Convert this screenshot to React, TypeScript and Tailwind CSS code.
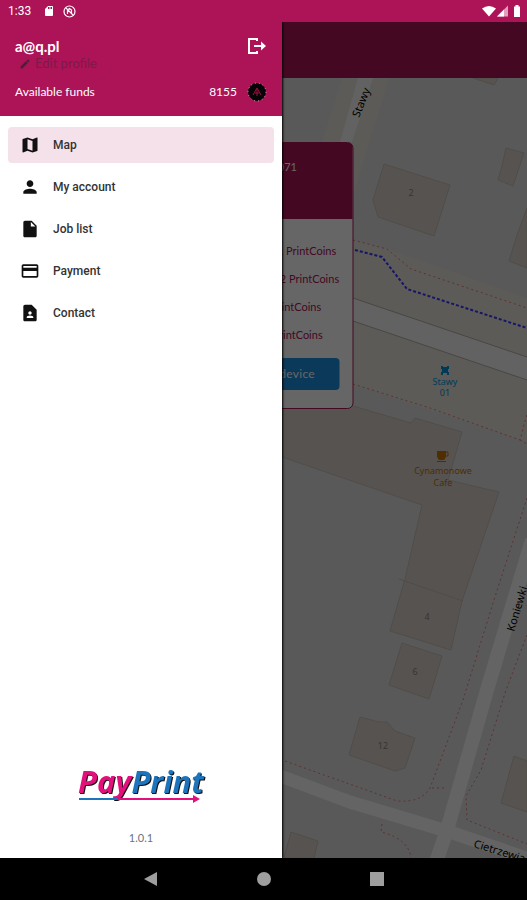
import type { ReactNode } from 'react'
import {
  MdContactPage,
  MdCreditCard,
  MdEdit,
  MdInsertDriveFile,
  MdMap,
  MdPerson,
  MdSdCard,
} from 'react-icons/md'

interface MenuItem {
  label: string
  href: string
  icon: ReactNode
}

const menuItems: MenuItem[] = [
  { label: 'Map', href: '#map', icon: <MdMap /> },
  { label: 'My account', href: '#account', icon: <MdPerson /> },
  { label: 'Job list', href: '#jobs', icon: <MdInsertDriveFile /> },
  { label: 'Payment', href: '#payment', icon: <MdCreditCard /> },
  { label: 'Contact', href: '#contact', icon: <MdContactPage /> },
]

const prices = ['A4 mono: 0.1 PrintCoins', 'A4 color: 0.12 PrintCoins', 'A4 scan: 1 PrintCoins', 'A4 copy: 1 PrintCoins']

function StatusBar() {
  return (
    <header className="flex h-[22px] items-center justify-between bg-[#ad1457] pl-2 pr-[5px] text-white">
      <div className="flex items-center gap-2">
        <span className="font-[Roboto,sans-serif] text-xs">1:33</span>
        <MdSdCard className="ml-1 h-3 w-3" />
        <svg className="h-[13px] w-[13px]" viewBox="0 0 13 13" fill="none" stroke="currentColor">
          <circle cx="6.5" cy="6.5" r="5.5" strokeWidth="1.2" />
          <path d="M4.500 9V5L6.500 3.500L8.500 5V8.500M3 3L10 10" strokeWidth="1.2" />
        </svg>
      </div>
      <svg className="h-3 w-10" viewBox="0 0 40 12" fill="currentColor">
        <path d="M0 3.5Q7 -1.5 14 3.5L7 11.500Z" />
        <path d="M26 0.500V11.500H15Z" opacity="0.6" />
        <path d="M22 4.500V11.500H15Z" />
        <path d="M32 1.500H33.500V0H36.500V1.500H38V12H32Z" />
      </svg>
    </header>
  )
}

function StreetMap() {
  return (
    <svg
      className="absolute inset-0 h-full w-full"
      viewBox="0 78 527 780"
      preserveAspectRatio="xMinYMin slice"
      fontFamily="'Noto Sans', sans-serif"
    >
      <rect y="78" width="527" height="780" fill="#e0dfdf" />

      {/* Road verges */}
      <path d="M342 78H389L353 195L340 240V310H270Z" fill="#e8e3db" />
      <path d="M282 216L353 240L387 249L527 298V442L353 384L282 362Z" fill="#e8e3db" />
      <path d="M358 78H373L352 142H340Z" fill="#f6f5f4" />
      <path d="M282 278L353 298L527 357V380L353 321L282 300Z" fill="#f6f5f4" />
      <path d="M282 278L353 298L527 357M282 300L353 321L527 380" fill="none" stroke="#b5afa8" strokeWidth="1" />

      {/* Streets */}
      <path d="M532 540L487 690L447 830L436 862" fill="none" stroke="#fafafa" strokeWidth="14" />
      <path d="M275 774L350 802L450 832L535 861" fill="none" stroke="#fafafa" strokeWidth="13" />

      {/* Buildings */}
      <g fill="#d9d0c9" stroke="#c9beb5" strokeWidth="1">
        <path d="M384 164L450 185L434 236L378 217L373 200Z" />
        <path d="M506 148L524 153L513 186L498 180L502 166Z" />
        <path d="M473 78H498L494 85Z" />
        <path d="M527 208L517 235L509 261L527 268Z" />
        <path d="M282 406H353L411 423L415 418L462 432L448 480L499 492L462 601L451 650L390 631L405 579L422 505L282 457Z" />
        <path d="M399 579L463 601" fill="none" />
        <path d="M402 643L442 656L429 699L389 685Z" />
        <path d="M360 717L379 722L387 722L395 731L415 738L405 768L395 771L349 755Z" />
        <path d="M291 832L318 841L314 858H284Z" />
        <path d="M514 756L527 761V812L501 803Z" />
      </g>
      <g fill="#8d857e" fontSize="9" textAnchor="middle">
        <text x="411" y="196">2</text>
        <text x="427" y="620">4</text>
        <text x="415" y="675">6</text>
        <text x="383" y="749">12</text>
      </g>

      {/* Footways */}
      <g fill="none" stroke="#e8787c" strokeWidth="1" strokeDasharray="2 3">
        <path d="M353 240L387 249L411 269L527 308" />
        <path d="M353 384L430 408L520 440L527 414M520 440L527 444" />
        <path d="M527 498L494 600L463 700L430 788Q421 803 397 801L282 760" />
        <path d="M527 635L506 690L481 770L466 796L467 820L527 844" />
        <path d="M432 788L447 788M382 824L381 832Q409 839 411 858" />
      </g>
      <path d="M355 250L382 257L407 289L527 328" fill="none" stroke="#3737ff" strokeWidth="2" strokeDasharray="3 2" />

      {/* Street names */}
      <g fill="#000" fontSize="11">
        <text transform="translate(359 118) rotate(-68)">Stawy</text>
        <text transform="translate(514 632) rotate(-73)">Koniewki</text>
        <text transform="translate(473 847) rotate(17)">Cietrzewia</text>
      </g>

      {/* Bus stop */}
      <g fill="#0092da" textAnchor="middle" fontSize="9">
        <path d="M441 366H443V367H447V366H449V369H448V372H449V375H447V373H443V375H441V372H442V369H441Z" />
        <text x="445" y="385">Stawy</text>
        <text x="445" y="396">01</text>
      </g>

      {/* Cafe */}
      <g fill="#c77400" textAnchor="middle" fontSize="9">
        <path d="M437 451H446V457L444 460H439L437 457Z" />
        <path d="M446 452H448V456H446" fill="none" stroke="#c77400" strokeWidth="1" />
        <path d="M437 461H446V462H437Z" />
        <text x="443" y="474">Cynamonowe</text>
        <text x="443" y="486">Cafe</text>
      </g>
    </svg>
  )
}

function DeviceCard() {
  return (
    <section className="absolute left-1/2 top-16 w-[179px] -translate-x-1/2 rounded-md border border-[#ad1457] bg-white">
      <h2 className="h-[76px] rounded-t-sm bg-[#ad1457] pr-[55px] pt-4 text-right text-[11px] leading-4 text-white">
        Device 071
      </h2>
      <ul className="pl-[43px] pt-[18px] text-[11px] leading-[28px] text-[#ad1457]">
        {prices.map(price => (
          <li key={price} className="whitespace-nowrap">{price}</li>
        ))}
      </ul>
      <button className="mx-3 mb-[18px] mt-[9px] block h-8 w-[152px] rounded-sm bg-[#1c8fdf] pr-6 text-right text-xs tracking-wide text-white">
        Select device
      </button>
    </section>
  )
}

function PayPrintLogo() {
  return (
    <svg className="h-10 w-32 overflow-visible" viewBox="0 0 128 40" role="img" aria-label="PayPrint">
      <text
        x="1"
        y="27"
        className="drop-shadow-[1px_1px_0_#111]"
        fontFamily="'Open Sans', sans-serif"
        fontSize="31"
        fontWeight="700"
        fontStyle="italic"
      >
        <tspan fill="#e2107c">Pay</tspan>
        <tspan fill="#1c75bc">Print</tspan>
      </text>
      <path d="M2 33H40" stroke="#1c75bc" strokeWidth="2" />
      <path d="M40 33H118" stroke="#e2107c" strokeWidth="2" />
      <path d="M116 29L123 33L116 37Z" fill="#e2107c" />
    </svg>
  )
}

function Drawer() {
  return (
    <aside className="absolute inset-y-0 left-0 flex w-[282px] flex-col bg-white shadow-[1px_0_2px_#000]">
      <div className="h-[94px] bg-[#ad1457] pl-[15px] pr-[15px] pt-3 text-white">
        <div className="flex items-center justify-between">
          <span className="text-[15px] font-bold leading-6">a@q.pl</span>
          <button aria-label="Log out">
            <svg className="h-5 w-5" viewBox="0 0 20 20" fill="none" stroke="currentColor" strokeWidth="2">
              <path d="M10 5V3H2V17H10V15M7 10H16" />
              <path d="M14 5.500L19 10L14 14.500Z" fill="currentColor" stroke="none" />
            </svg>
          </button>
        </div>
        <button className="ml-1 flex h-3 items-center gap-1 text-[13px] text-[#7c1a4a]">
          <MdEdit className="h-3 w-3 text-[#4a2038]" />
          Edit profile
        </button>
        <div className="mt-3 flex items-center text-xs leading-5">
          <span>Available funds</span>
          <span className="ml-auto">8155</span>
          <svg className="ml-[10px] h-5 w-5" viewBox="0 0 20 20">
            <circle cx="10" cy="10" r="9" fill="#050505" />
            <circle cx="10" cy="10" r="9" fill="none" stroke="#d8a0b8" strokeWidth="1" strokeDasharray="1 3" />
            <path d="M6 13L10 6L14 13M8 11H12M10 7V14" fill="none" stroke="#9c1145" strokeWidth="1" />
          </svg>
        </div>
      </div>

      <nav className="flex flex-col gap-[6px] px-2 pt-[11px]">
        {menuItems.map(({ label, href, icon }) => (
          <a
            key={label}
            href={href}
            className={`flex h-9 items-center gap-[13px] rounded px-3 font-[Roboto,sans-serif] text-xs font-medium text-[#333] ${label === 'Map' ? 'bg-[#f5e1e9]' : ''}`}
          >
            <span className="text-xl text-[#111]">{icon}</span>
            {label}
          </a>
        ))}
      </nav>

      <div className="mt-auto flex flex-col items-center gap-6 pb-3">
        <PayPrintLogo />
        <p className="text-[11px] leading-4 text-gray-500">1.0.1</p>
      </div>
    </aside>
  )
}

function NavigationBar() {
  return (
    <footer className="flex h-[42px] items-center justify-center gap-[97px] bg-black text-[#9e9e9e]">
      <button aria-label="Back">
        <svg className="h-4 w-4" viewBox="0 0 16 16" fill="currentColor"><path d="M14 1V15L1 8Z" /></svg>
      </button>
      <button aria-label="Home">
        <svg className="h-4 w-4" viewBox="0 0 16 16" fill="currentColor"><circle cx="8" cy="8" r="7" /></svg>
      </button>
      <button aria-label="Recent apps">
        <svg className="h-4 w-4" viewBox="0 0 16 16" fill="currentColor"><path d="M1 1H15V15H1Z" /></svg>
      </button>
    </footer>
  )
}

export default function App() {
  return (
    <div className="flex min-h-screen flex-col font-[Lato,sans-serif]">
      <StatusBar />
      <main className="relative flex flex-1 flex-col overflow-hidden">
        <div className="h-14 bg-[#ad1457]" />
        <div className="relative flex-1">
          <StreetMap />
          <DeviceCard />
        </div>
        <div className="absolute inset-0 bg-black/60" />
        <Drawer />
      </main>
      <NavigationBar />
    </div>
  )
}
